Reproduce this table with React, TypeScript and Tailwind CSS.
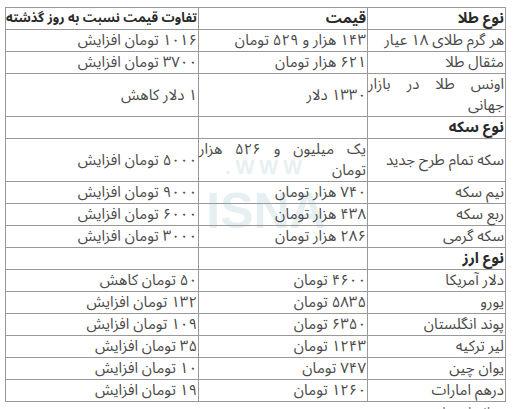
const rows: { name: string; price?: string; diff?: string; group?: boolean; tall?: boolean }[] = [
  { name: "هر گرم طلای ۱۸ عیار", price: "۱۴۳ هزار و ۵۲۹ تومان", diff: "۱۰۱۶ تومان افزایش" },
  { name: "مثقال طلا", price: "۶۲۱ هزار تومان", diff: "۳۷۰۰ تومان افزایش" },
  { name: "اونس طلا در بازار جهانی", price: "۱۳۳۰ دلار", diff: "۱ دلار کاهش", tall: true },
  { name: "نوع سکه", group: true },
  { name: "سکه تمام طرح جدید", price: "یک میلیون و ۵۲۶ هزار تومان", diff: "۵۰۰۰ تومان افزایش", tall: true },
  { name: "نیم سکه", price: "۷۴۰ هزار تومان", diff: "۹۰۰۰ تومان افزایش" },
  { name: "ربع سکه", price: "۴۳۸ هزار تومان", diff: "۶۰۰۰ تومان افزایش" },
  { name: "سکه گرمی", price: "۲۸۶ هزار تومان", diff: "۳۰۰۰ تومان افزایش" },
  { name: "نوع ارز", group: true },
  { name: "دلار آمریکا", price: "۴۶۰۰ تومان", diff: "۵۰ تومان کاهش" },
  { name: "یورو", price: "۵۸۳۵ تومان", diff: "۱۳۲ تومان افزایش" },
  { name: "پوند انگلستان", price: "۶۳۵۰ تومان", diff: "۱۰۹ تومان افزایش" },
  { name: "لیر ترکیه", price: "۱۲۴۳ تومان", diff: "۳۵ تومان افزایش" },
  { name: "یوان چین", price: "۷۴۷ تومان", diff: "۱۰ تومان افزایش" },
  { name: "درهم امارات", price: "۱۲۶۰ تومان", diff: "۱۹ تومان افزایش" },
];

export default function App() {
  return (
    <div
      dir="rtl"
      className="relative h-[409px] w-[513px] overflow-hidden bg-white pt-[7px] pl-[6px] pr-[7px] text-[15px] text-[#4a4a4a]"
      style={{ fontFamily: '"Noto Sans Arabic", "Noto Naskh Arabic", "DejaVu Sans", sans-serif' }}
    >
      {/* watermark */}
      <div
        className="pointer-events-none absolute left-[186px] top-[152px] flex w-[160px] flex-col items-center text-[#e6f0f3]"
        style={{ fontFamily: '"Liberation Sans", sans-serif' }}
      >
        <span className="text-[20px] font-bold tracking-[5px]">WWW.</span>
        <span className="-mt-2 text-[50px] font-bold">ISNA</span>
      </div>

      <table className="relative w-[500px] table-fixed border-collapse border border-[#333]">
        <colgroup>
          <col className="w-[138px]" />
          <col className="w-[169px]" />
          <col className="w-[193px]" />
        </colgroup>
        <thead>
          <tr className="font-bold text-[#2a2a2a]">
            <td className="border border-[#999] p-0 pr-px text-right align-middle leading-[21px]">نوع طلا</td>
            <td className="border border-[#999] p-0 pr-px text-right align-middle leading-[21px]">قیمت</td>
            <td className="whitespace-nowrap border border-[#999] p-0 pr-px text-right align-middle text-[13px] leading-[21px]">
              تفاوت قیمت  نسبت به روز گذشته
            </td>
          </tr>
        </thead>
        <tbody>
          {rows.map((row) => (
            <tr key={row.name}>
              <td
                className={`border border-[#999] p-0 pr-px align-middle leading-[21px] ${
                  row.group ? "font-bold text-[#2a2a2a]" : ""
                } ${row.tall ? "text-justify" : "text-right"}`}
              >
                {row.name}
              </td>
              <td
                className={`border border-[#999] p-0 pr-px align-middle leading-[21px] ${
                  row.tall ? "text-justify" : "text-right whitespace-nowrap"
                }`}
              >
                {row.price}
              </td>
              <td className="whitespace-nowrap border border-[#999] p-0 pr-px text-right align-middle leading-[21px]">
                {row.diff}
              </td>
            </tr>
          ))}
        </tbody>
      </table>
      <p className="mt-[1px] pr-[16px] text-right text-[13px] text-[#666]">انتهای پیام</p>
    </div>
  );
}
